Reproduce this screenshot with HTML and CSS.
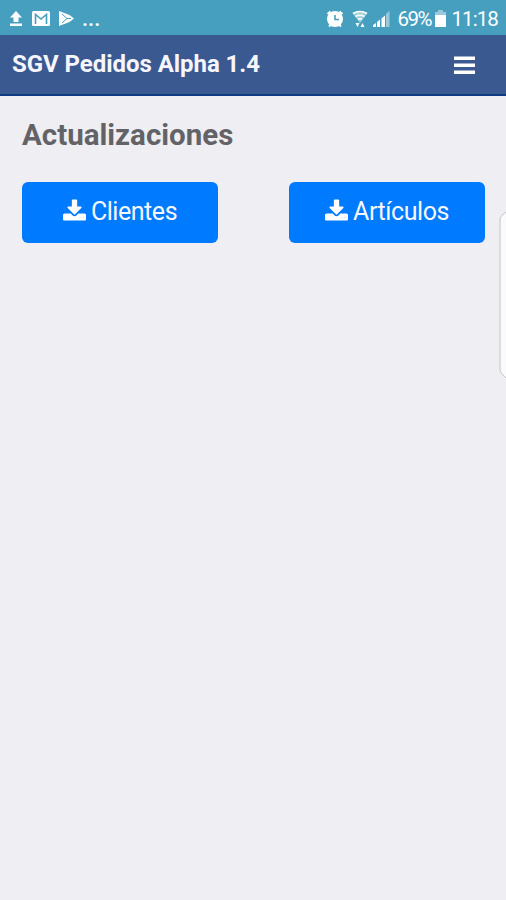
FILE: index.html
```html
<!DOCTYPE html>
<html lang="es">
<head>
  <meta charset="UTF-8">
  <meta name="viewport" content="width=device-width, initial-scale=1.0">
  <title>SGV Pedidos</title>
  <link rel="stylesheet" href="styles.css">
</head>
<body>

<div class="status-bar">
  <div class="status-left">
    <svg class="icon-upload" width="14" height="16" viewBox="0 0 14 16"><path d="M7 0l6 6.500H9.500V11h-5V6.500H1zM1 12.500h12V15H1z"/></svg>
    <svg class="icon-mail" width="18" height="15" viewBox="0 0 18 15"><rect width="18" height="15" rx="1.500"/><path class="mail-line" d="M3.500 13V3.500L9 8l5.500-4.500V13"/></svg>
    <svg class="icon-play" width="17" height="17" viewBox="0 0 17 17"><path d="M1 1l10.500 4L16 8.500 11.500 12 1 16z"/><path class="play-line" d="M4 4l5 4.500L4 13M9 8.500h4"/></svg>
    <span class="dots">...</span>
  </div>
  <div class="status-right">
    <svg class="icon-alarm" width="18" height="18" viewBox="0 0 18 18"><circle cx="9" cy="9" r="8"/><path d="M1.500 4l3-2.500M16.500 4l-3-2.500M3 16.500l2-2M15 16.500l-2-2"/><path class="alarm-hand" d="M9 5v4.500h4"/></svg>
    <svg class="icon-wifi" width="16" height="18" viewBox="0 0 16 18"><path class="wifi-base" d="M.500 3Q8-1 15.500 3L8 13z"/><path class="wifi-arc" d="M1 3.500Q8-.500 15 3.500M3.500 6.500q4.500-2.500 9 0M6 9.500q2-1.500 4 0"/><path d="M3.500 13h4l-2 4zM8.500 17h4l-2-4z"/></svg>
    <svg class="icon-signal" width="17" height="17" viewBox="0 0 17 17"><path d="M0 17v-2l3-2v4zM4 17v-5l3-2.500V17zM8.500 17V8.500L12 5.500V17z"/><path class="signal-off" d="M13 17V4l3.500-3v16z"/></svg>
    <span class="battery-text">69%</span>
    <svg class="icon-battery" width="11" height="17" viewBox="0 0 11 17"><path class="battery-off" d="M3 0h5v2h3v4H0V2h3z"/><path d="M0 5h11v12H0z"/></svg>
    <span class="clock">11:18</span>
  </div>
</div>

<header>
  <span class="title">SGV Pedidos Alpha 1.4</span>
  <button class="menu-button" aria-label="Menú">
    <svg width="22" height="20" viewBox="0 0 22 20"><path d="M0 .500h21v3.500H0zM0 7.500h21V11H0zM0 14.500h21V18H0z"/></svg>
  </button>
</header>

<main class="main-content">
  <h1>Actualizaciones</h1>
  <div class="buttons">
    <button class="btn">
      <svg width="23" height="22" viewBox="0 0 1664 1536"><path d="M1664 1120v320q0 40-28 68t-68 28h-1472q-40 0-68-28t-28-68v-320q0-40 28-68t68-28h465l135 136q58 56 136 56t136-56l136-136h464q40 0 68 28t28 68zm-325-569q17 41-14 70l-448 448q-18 19-45 19t-45-19l-448-448q-31-29-14-70 17-39 59-39h256v-448q0-26 19-45t45-19h256q26 0 45 19t19 45v448h256q42 0 59 39z"/><path class="lights" d="M1190 1310h90v60h-90zM1440 1310h90v60h-90z"/></svg>
      <span class="label">Clientes</span>
    </button>
    <button class="btn">
      <svg width="23" height="22" viewBox="0 0 1664 1536"><path d="M1664 1120v320q0 40-28 68t-68 28h-1472q-40 0-68-28t-28-68v-320q0-40 28-68t68-28h465l135 136q58 56 136 56t136-56l136-136h464q40 0 68 28t28 68zm-325-569q17 41-14 70l-448 448q-18 19-45 19t-45-19l-448-448q-31-29-14-70 17-39 59-39h256v-448q0-26 19-45t45-19h256q26 0 45 19t19 45v448h256q42 0 59 39z"/><path class="lights" d="M1190 1310h90v60h-90zM1440 1310h90v60h-90z"/></svg>
      <span class="label">Artículos</span>
    </button>
  </div>
</main>

<!-- Pestaña del panel lateral -->
<svg class="edge-handle" width="7" height="170" viewBox="0 0 7 170"><path d="M8 1L3 5.500Q1 7 1 10v149q0 3 2 5l5 5"/></svg>

</body>
</html>
```
FILE: styles.css
```css
* {
  box-sizing: border-box;
}
body {
  font-family: Roboto, sans-serif;
  margin: 0;
  height: 100vh;
  background-color: #efeef3;
  overflow: hidden;
}
svg {
  display: block;
  flex: none;
  fill: #fff;
}

/* Barra de estado */
.status-bar {
  display: flex;
  justify-content: space-between;
  height: 35px;
  padding: 0 8px 0 9px;
  background-color: #469fbf;
  color: #fff;
}
.status-left,
.status-right {
  display: flex;
  align-items: center;
  padding-top: 2px;
}
.icon-mail {
  margin-left: 9px;
}
.mail-line,
.play-line,
.alarm-hand {
  fill: none;
  stroke: #469fbf;
  stroke-width: 1.6;
}
.icon-play {
  margin-left: 8px;
}
.play-line {
  stroke-width: 1;
}
.dots {
  font-size: 22px;
  font-weight: 500;
  margin-left: 7px;
}
.icon-alarm {
  stroke: #fff;
  stroke-width: 2;
}
.icon-alarm circle {
  stroke: none;
}
.icon-wifi {
  margin-left: 8px;
}
.wifi-base {
  opacity: 0.5;
}
.wifi-arc {
  fill: none;
  stroke: #fff;
  stroke-width: 1.5;
}
.icon-signal {
  margin-left: 5px;
}
.signal-off,
.battery-off {
  opacity: 0.45;
}
.battery-text,
.clock {
  font-size: 20.5px;
  line-height: 24px;
  white-space: nowrap;
}
.battery-text {
  width: 35px;
  letter-spacing: -1.5px;
  margin-left: 7px;
}
.icon-battery {
  margin-left: 3px;
}
.clock {
  letter-spacing: -0.9px;
  margin-left: 5px;
}

/* Encabezado */
header {
  display: flex;
  justify-content: space-between;
  align-items: center;
  height: 61px;
  padding: 0 30px 1px 12px;
  background-color: #3b5991;
  border-bottom: 2px solid #0d3b83;
}
.title {
  color: #f5f5fb;
  font-size: 24px;
  font-weight: 700;
  letter-spacing: -0.05px;
}
.menu-button {
  padding: 3px 0 0;
  border: none;
  background: transparent;
}

/* Contenido */
.main-content {
  padding: 21px 21px 0 22px;
}
h1 {
  margin: 0;
  font-size: 29.5px;
  font-weight: 700;
  line-height: 36px;
  color: #636367;
}
.buttons {
  display: flex;
  justify-content: space-between;
  margin-top: 29px;
}
.btn {
  display: flex;
  justify-content: center;
  align-items: center;
  gap: 5px;
  width: 196px;
  height: 61px;
  padding: 0 0 2px;
  border: none;
  border-radius: 6px;
  background-color: #007aff;
  color: #f5f8ff;
  font-family: inherit;
  font-size: 25px;
  letter-spacing: -0.45px;
}
.btn svg {
  margin-bottom: 4px;
}
.lights {
  fill: #007aff;
  opacity: 0.4;
}

.edge-handle {
  position: absolute;
  top: 210px;
  right: 0;
  fill: #fafafc;
  stroke: #c4c4c8;
}
```
